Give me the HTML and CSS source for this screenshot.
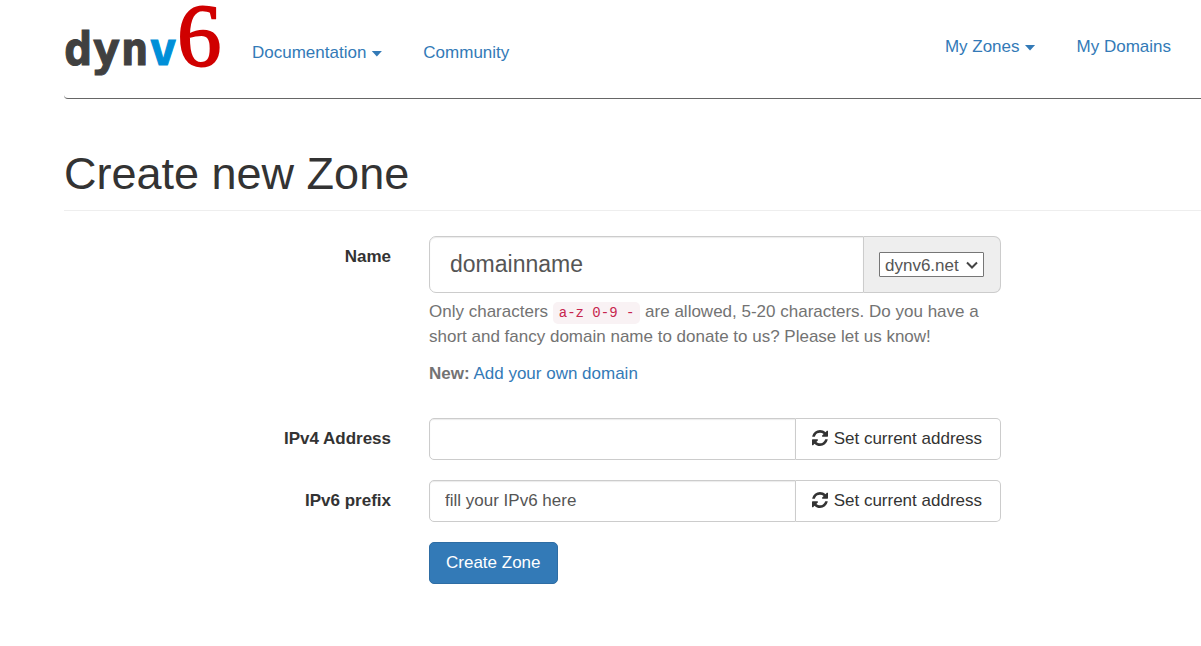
FILE: index.html
```html
<!DOCTYPE html>
<html lang="en">
<head>
<meta charset="utf-8">
<meta name="viewport" content="width=device-width, initial-scale=1">
<title>Create new Zone</title>
<link rel="stylesheet" href="styles.css">
</head>
<body>
<svg class="sprite" aria-hidden="true">
  <symbol id="refresh" viewBox="0 0 1536 1536">
    <path d="M1511 928q0 5-1 7-64 268-268 434.500T764 1536q-146 0-282.500-55T238 1324l-129 129q-19 19-45 19t-45-19-19-45V960q0-26 19-45t45-19h448q26 0 45 19t19 45-19 45l-137 137q71 66 161 102t187 36q134 0 250-65t186-179q11-17 53-117 8-23 30-23h192q13 0 22.500 9.500t9.500 22.500zM1536 128v448q0 26-19 45t-45 19h-448q-26 0-45-19t-19-45 19-45l138-138Q969 256 768 256q-134 0-250 65T332 500q-11 17-53 117-8 23-30 23H50q-13 0-22.500-9.500T18 608v-7q65-268 270-434.500T768 0q146 0 284 55.500T1297 212l130-129q19-19 45-19t45 19 19 45z"/>
  </symbol>
</svg>
<div class="page">
  <header class="header">
    <a class="logo" href="#" aria-label="dynv6"><span class="logo-dyn">dyn</span><span class="logo-v">v</span><span class="logo-six">6</span></a>
    <nav class="nav nav-main">
      <a href="#">Documentation<span class="caret"></span></a>
      <a href="#">Community</a>
    </nav>
    <nav class="nav nav-user">
      <a href="#">My Zones<span class="caret"></span></a>
      <a href="#">My Domains</a>
    </nav>
  </header>
  <main>
    <h1 class="title">Create new Zone</h1>
    <form class="form">
      <div class="row row-name">
        <label class="label" for="name">Name</label>
        <div class="field">
          <div class="group group-large">
            <input class="input" id="name" type="text" value="domainname">
            <div class="addon">
              <div class="select-wrap">
                <select class="select" aria-label="Domain"><option>dynv6.net</option></select>
                <svg class="chevron" viewBox="0 0 12 8" aria-hidden="true"><path d="M1 1.500L6 6.500L11 1.500"/></svg>
              </div>
            </div>
          </div>
          <p class="help">Only characters <code class="code">a-z 0-9 -</code> are allowed, 5-20 characters. Do you have a short and fancy domain name to donate to us? Please let us know!</p>
          <p class="help help-new"><strong>New:</strong> <a href="#">Add your own domain</a></p>
        </div>
      </div>
      <div class="row">
        <label class="label" for="ipv4">IPv4 Address</label>
        <div class="group">
          <input class="input" id="ipv4" type="text">
          <button class="set" type="button"><svg class="icon"><use href="#refresh"/></svg>Set current address</button>
        </div>
      </div>
      <div class="row">
        <label class="label" for="ipv6">IPv6 prefix</label>
        <div class="group">
          <input class="input" id="ipv6" type="text" value="fill your IPv6 here">
          <button class="set" type="button"><svg class="icon"><use href="#refresh"/></svg>Set current address</button>
        </div>
      </div>
      <div class="row">
        <div class="submit"><button class="create" type="submit">Create Zone</button></div>
      </div>
    </form>
  </main>
</div>
</body>
</html>
```
FILE: styles.css
```css
* { box-sizing: border-box; }
body {
  margin: 0;
  background: #fff;
  color: #333;
  font: 17px/25px "Liberation Sans", Arial, sans-serif;
}
input, select, button { font: inherit; color: inherit; }
a { color: #337ab7; text-decoration: none; }
.sprite { display: none; }
.page { padding-left: 64px; }

.header {
  display: flex;
  align-items: flex-start;
  height: 99px;
  padding-right: 30px;
  border-bottom: 1px solid #666;
  border-bottom-left-radius: 4px;
}
.nav { display: flex; gap: 41px; }
.nav-main { padding-top: 40px; }
.nav-user { margin-left: auto; padding-top: 34px; }
.caret {
  display: inline-block;
  width: 11px;
  height: 6px;
  margin-left: 5px;
  background: currentColor;
  clip-path: polygon(0 0, 100% 0, 50% 100%);
  vertical-align: middle;
}
.logo {
  width: 188px;
  height: 80px;
  white-space: nowrap;
  font: bold 47px/72px "DejaVu Sans Mono", monospace;
}
.logo-dyn { color: #404040; -webkit-text-stroke: 1px #404040; }
.logo-v { color: #008fd8; -webkit-text-stroke: 1px #008fd8; }
.logo-six {
  color: #d00000;
  font: 88px/72px "Liberation Serif", serif;
  -webkit-text-stroke: 2px #d00000;
}

.title {
  margin: 50px 0 25px;
  padding-bottom: 11px;
  border-bottom: 1px solid #eee;
  font-size: 45px;
  font-weight: 400;
  line-height: 50px;
}
.form { display: grid; gap: 20px; }
.row {
  display: grid;
  grid-template-columns: 327fr 572fr 162fr;
  column-gap: 38px;
}
.row-name { margin-bottom: 11px; }
.label { padding-top: 8px; text-align: right; font-weight: 700; }
.group { display: flex; height: 42px; }
.group-large { height: 57px; }
.input {
  flex: 1;
  min-width: 0;
  padding: 0 15px 2px;
  border: 1px solid #ccc;
  border-radius: 5px 0 0 5px;
  background: #fff;
  color: #555;
  box-shadow: inset 0 1px 1px rgba(0, 0, 0, .08);
}
.group-large .input { padding: 0 20px; border-radius: 7px 0 0 7px; font-size: 23px; }
.addon {
  display: flex;
  align-items: center;
  padding: 0 16px 0 15px;
  border: 1px solid #ccc;
  border-left: 0;
  border-radius: 0 7px 7px 0;
  background: #eee;
  color: #555;
}
.select-wrap { display: grid; align-items: center; }
.select {
  grid-area: 1 / 1;
  height: 25px;
  padding: 0 24px 0 5px;
  border: 1px solid #767676;
  border-radius: 1px;
  background: #fff;
  appearance: none;
}
.chevron {
  grid-area: 1 / 1;
  justify-self: end;
  width: 12px;
  height: 8px;
  margin-right: 6px;
  fill: none;
  stroke: #444;
  stroke-width: 2;
  pointer-events: none;
}
.help { margin: 6px 0 0; color: #737373; }
.help-new { margin-top: 12px; padding-bottom: 1px; }
.code {
  padding: 3px 6px;
  border-radius: 5px;
  background: #f9f2f4;
  color: #c7254e;
  font: 14px "Liberation Mono", monospace;
}
.set {
  display: flex;
  align-items: center;
  gap: 6px;
  padding: 0 18px 2px 16px;
  border: 1px solid #ccc;
  border-left: 0;
  border-radius: 0 5px 5px 0;
  background: #fff;
  white-space: nowrap;
}
.icon { width: 16px; height: 16px; fill: currentColor; }
.submit { grid-column: 2; }
.create {
  height: 42px;
  padding: 0 16px 2px;
  border: 1px solid #2e6da4;
  border-radius: 5px;
  background: #337ab7;
  color: #fff;
}
```
